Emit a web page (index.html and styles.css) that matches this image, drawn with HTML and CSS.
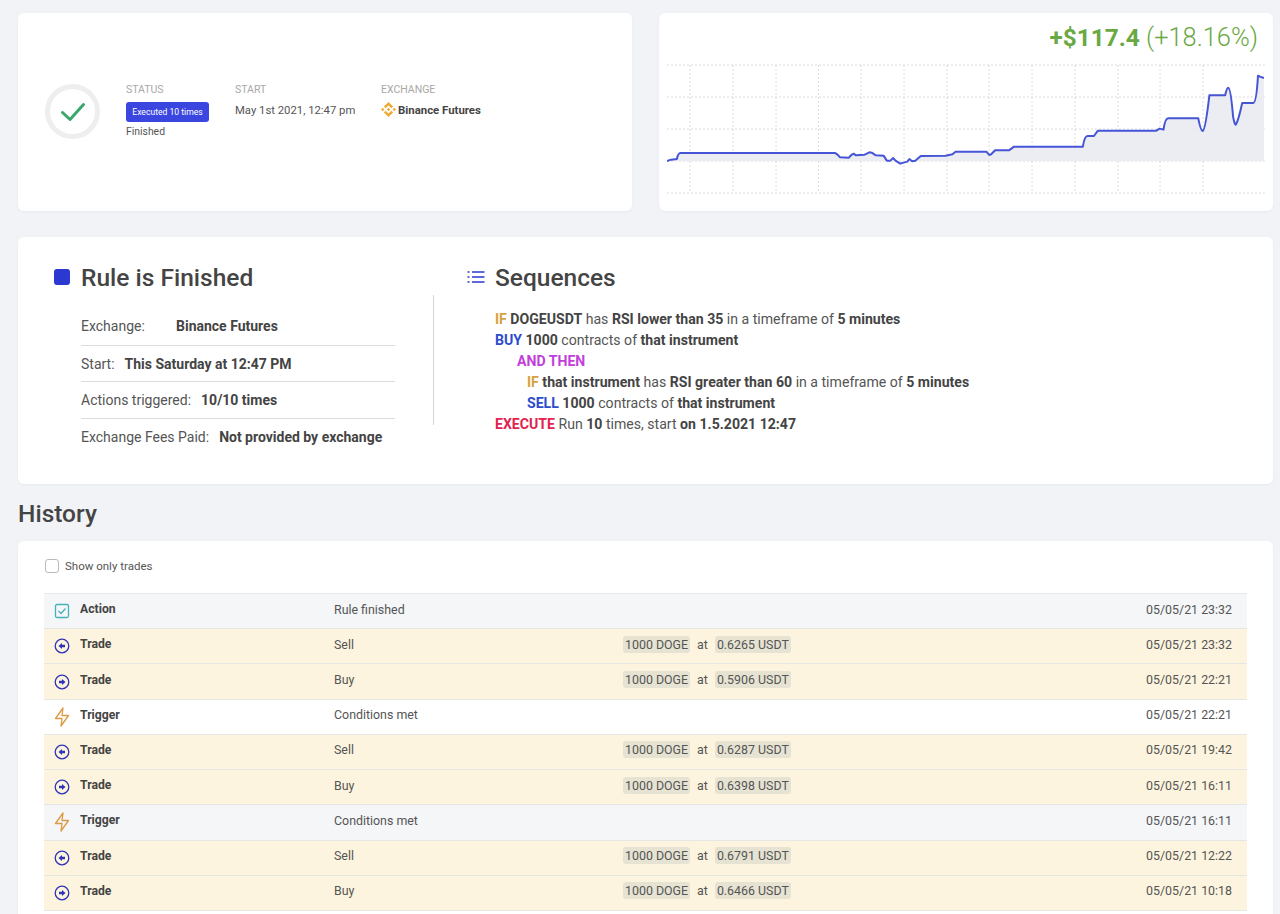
FILE: index.html
```html
<!DOCTYPE html>
<html lang="en">
<head>
<meta charset="utf-8">
<title>Rule is Finished</title>
<link rel="stylesheet" href="styles.css">
</head>
<body>
<main class="page">
  <section class="top">
    <div class="card summary">
      <div class="ring">
        <svg class="tick" viewBox="0 0 24 24"><path d="M1.500 12.500 9 19.500 22.500 4.500"/></svg>
      </div>
      <div class="meta meta-status">
        <div class="meta-label">STATUS</div>
        <div class="badge">Executed 10 times</div>
        <div class="meta-note">Finished</div>
      </div>
      <div class="meta meta-start">
        <div class="meta-label">START</div>
        <div class="meta-value">May 1st 2021, 12:47 pm</div>
      </div>
      <div class="meta">
        <div class="meta-label">EXCHANGE</div>
        <div class="exchange">
          <svg class="binance" viewBox="0 0 126.61 126.61"><path d="M38.73 53.2l24.59-24.58 24.6 24.6 14.3-14.31L63.32 0 24.43 38.9zM0 63.31l14.3-14.31 14.31 14.31-14.31 14.3zM38.73 73.41l24.59 24.59 24.6-24.6 14.31 14.29-38.9 38.91-38.91-38.88zM98 63.31l14.3-14.31 14.31 14.3-14.31 14.32zM77.83 63.3L63.32 48.78 52.59 59.51l-1.24 1.23-2.54 2.54 14.51 14.5 14.51-14.52z"/></svg>
          <span>Binance Futures</span>
        </div>
      </div>
    </div>
    <div class="card chart-card">
      <div class="profit"><b>+$117.4</b> <span>(+18.16%)</span></div>
      <svg class="chart" viewBox="0 0 598 135">
        <g class="grid-h">
          <path d="M0 5H598M0 37H598M0 69H598M0 101H598M0 133H598"/>
        </g>
        <g class="grid-v">
          <path d="M23 5V133M66 5V133M109 5V133M151.500 5V133M194 5V133M237 5V133M280 5V133M322 5V133M365 5V133M408 5V133M451 5V133M493 5V133M536 5V133"/>
        </g>
        <g transform="translate(-7.900 -50) scale(0.3953 0.3333)">
          <path class="area" d="M20 453L30 449 45 447 Q48 429 54 429L445 429Q450 431 458 442L480 443Q486 434 492 431L498 436 520 434 532 427 538 428 548 436 568 437 576 452 585 452 592 444 598 452 610 461 628 455 633 447 640 454 648 452 662 438 725 437 742 433 750 425 828 425 835 435 840 433 850 421 885 421 898 410 1072 410Q1076 378 1084 378L1100 378 1110 362 1258 362 1266 356 1276 359Q1280 325 1288 325L1364 325Q1370 362 1375 363 1382 360 1392 256L1432 256Q1436 233 1440 233 1446 235 1452 320 1456 345 1459 344 1466 330 1475 279L1503 279Q1511 279 1515 197L1520 200 1530 204V453Z"/>
          <path class="line" d="M20 453L30 449 45 447 Q48 429 54 429L445 429Q450 431 458 442L480 443Q486 434 492 431L498 436 520 434 532 427 538 428 548 436 568 437 576 452 585 452 592 444 598 452 610 461 628 455 633 447 640 454 648 452 662 438 725 437 742 433 750 425 828 425 835 435 840 433 850 421 885 421 898 410 1072 410Q1076 378 1084 378L1100 378 1110 362 1258 362 1266 356 1276 359Q1280 325 1288 325L1364 325Q1370 362 1375 363 1382 360 1392 256L1432 256Q1436 233 1440 233 1446 235 1452 320 1456 345 1459 344 1466 330 1475 279L1503 279Q1511 279 1515 197L1520 200 1530 204"/>
        </g>
      </svg>
    </div>
  </section>

  <section class="card rule">
    <div class="rule-left">
      <h2 class="heading"><span class="square"></span>Rule is Finished</h2>
      <ul class="facts">
        <li><span class="fact-name fact-wide">Exchange:</span><b>Binance Futures</b></li>
        <li><span class="fact-name">Start:</span><b>This Saturday at 12:47 PM</b></li>
        <li><span class="fact-name">Actions triggered:</span><b>10/10 times</b></li>
        <li><span class="fact-name">Exchange Fees Paid:</span><b>Not provided by exchange</b></li>
      </ul>
    </div>
    <div class="divider"></div>
    <div class="rule-right">
      <h2 class="heading">
        <svg class="list-icon" viewBox="0 0 18 14"><path d="M5 2H17.500M5 7H17.500M5 12H17.500"/><path class="dots" d="M.5 2H2.500M.5 7H2.500M.5 12H2.500"/></svg>
        Sequences
      </h2>
      <div class="seq">
        <p><span class="k-if">IF</span> <b>DOGEUSDT</b> has <b>RSI lower than 35</b> in a timeframe of <b>5 minutes</b></p>
        <p><span class="k-do">BUY</span> <b>1000</b> contracts of <b>that instrument</b></p>
        <p class="lvl-1"><span class="k-then">AND THEN</span></p>
        <p class="lvl-2"><span class="k-if">IF</span> <b>that instrument</b> has <b>RSI greater than 60</b> in a timeframe of <b>5 minutes</b></p>
        <p class="lvl-2"><span class="k-do">SELL</span> <b>1000</b> contracts of <b>that instrument</b></p>
        <p><span class="k-exec">EXECUTE</span> Run <b>10</b> times, start <b>on 1.5.2021 12:47</b></p>
      </div>
    </div>
  </section>

  <h2 class="history-title">History</h2>

  <section class="card history">
    <label class="filter"><span class="box"></span>Show only trades</label>
    <div class="table">
      <div class="row grey">
        <svg class="ico" viewBox="0 0 16 16"><rect class="teal" x="1.500" y="1.500" width="13" height="13" rx="1.500"/><path class="teal" d="M4.500 8 7 10.500 11.500 5.500"/></svg>
        <b>Action</b><span>Rule finished</span><span></span><span>05/05/21 23:32</span>
      </div>
      <div class="row trade">
        <svg class="ico" viewBox="0 0 16 16"><circle class="blue" cx="8" cy="8" r="6.800"/><path class="blue-fill" d="M4.500 8 8 5V6.800H11V9.200H8V11Z"/></svg>
        <b>Trade</b><span>Sell</span><span class="amounts"><em>1000 DOGE</em>at<em>0.6265 USDT</em></span><span>05/05/21 23:32</span>
      </div>
      <div class="row trade">
        <svg class="ico" viewBox="0 0 16 16"><circle class="blue" cx="8" cy="8" r="6.800"/><path class="blue-fill" d="M11.500 8 8 5V6.800H5V9.200H8V11Z"/></svg>
        <b>Trade</b><span>Buy</span><span class="amounts"><em>1000 DOGE</em>at<em>0.5906 USDT</em></span><span>05/05/21 22:21</span>
      </div>
      <div class="row">
        <svg class="ico bolt" viewBox="0 0 16 20"><path class="amber" d="M9 1 1.500 11.500H8L7 19 14.500 8.500H8Z"/></svg>
        <b>Trigger</b><span>Conditions met</span><span></span><span>05/05/21 22:21</span>
      </div>
      <div class="row trade">
        <svg class="ico" viewBox="0 0 16 16"><circle class="blue" cx="8" cy="8" r="6.800"/><path class="blue-fill" d="M4.500 8 8 5V6.800H11V9.200H8V11Z"/></svg>
        <b>Trade</b><span>Sell</span><span class="amounts"><em>1000 DOGE</em>at<em>0.6287 USDT</em></span><span>05/05/21 19:42</span>
      </div>
      <div class="row trade">
        <svg class="ico" viewBox="0 0 16 16"><circle class="blue" cx="8" cy="8" r="6.800"/><path class="blue-fill" d="M11.500 8 8 5V6.800H5V9.200H8V11Z"/></svg>
        <b>Trade</b><span>Buy</span><span class="amounts"><em>1000 DOGE</em>at<em>0.6398 USDT</em></span><span>05/05/21 16:11</span>
      </div>
      <div class="row grey">
        <svg class="ico bolt" viewBox="0 0 16 20"><path class="amber" d="M9 1 1.500 11.500H8L7 19 14.500 8.500H8Z"/></svg>
        <b>Trigger</b><span>Conditions met</span><span></span><span>05/05/21 16:11</span>
      </div>
      <div class="row trade">
        <svg class="ico" viewBox="0 0 16 16"><circle class="blue" cx="8" cy="8" r="6.800"/><path class="blue-fill" d="M4.500 8 8 5V6.800H11V9.200H8V11Z"/></svg>
        <b>Trade</b><span>Sell</span><span class="amounts"><em>1000 DOGE</em>at<em>0.6791 USDT</em></span><span>05/05/21 12:22</span>
      </div>
      <div class="row trade">
        <svg class="ico" viewBox="0 0 16 16"><circle class="blue" cx="8" cy="8" r="6.800"/><path class="blue-fill" d="M11.500 8 8 5V6.800H5V9.200H8V11Z"/></svg>
        <b>Trade</b><span>Buy</span><span class="amounts"><em>1000 DOGE</em>at<em>0.6466 USDT</em></span><span>05/05/21 10:18</span>
      </div>
    </div>
  </section>
</main>
</body>
</html>
```

FILE: styles.css
```css
* { box-sizing: border-box; }
html, body { margin: 0; height: 914px; overflow: hidden; }
body {
  background: #f1f3f7;
  color: #444;
  font-family: Roboto, "Liberation Sans", sans-serif;
  font-size: 14px;
}
.page { padding: 13px 7px 0 18px; }
.card {
  background: #fff;
  border-radius: 6px;
  box-shadow: 0 1px 3px rgba(40, 50, 80, .05);
}

/* top row */
.top { display: grid; grid-template-columns: 614px 614px; gap: 27px; }
.summary { height: 198px; display: flex; align-items: flex-start; padding: 71px 0 0 27px; }
.ring {
  width: 55px; height: 55px; border: 5px solid #eeeeee; border-radius: 50%;
  display: flex; align-items: center; justify-content: center;
  flex: none;
}
.tick { width: 24px; height: 24px; fill: none; stroke: #3aa76d; stroke-width: 3; stroke-linecap: round; stroke-linejoin: round; }
.meta { margin-top: -1px; }
.meta-status { margin-left: 26px; width: 109px; }
.meta-start { width: 146px; }
.meta-label { font-size: 10.500px; line-height: 13px; color: #a8a8a8; }
.badge {
  margin-top: 6px; width: 83px; height: 20px; border-radius: 3px;
  background: #3b46e0; color: #fff; font-size: 8.600px; line-height: 20px; text-align: center;
}
.meta-note { margin-top: 3px; font-size: 10.400px; line-height: 14px; color: #555; }
.meta-value { margin-top: 8px; font-size: 11.300px; line-height: 14px; color: #555; }
.exchange { display: flex; align-items: center; gap: 2px; margin-top: 6px; font-size: 11.400px; line-height: 14px; font-weight: 700; color: #444; }
.binance { width: 15px; height: 15px; fill: #eeaa33; }

.chart-card { height: 198px; padding: 8px 8px 0 8px; display: flex; flex-direction: column; }
.profit { text-align: right; padding-right: 7px; font-size: 25px; line-height: 32px; color: #6aa843; }
.profit b { font-weight: 700; font-size: 24.400px; }
.profit span { font-weight: 300; font-size: 25.400px; }
.chart { display: block; width: 598px; height: 135px; margin-top: 6px; }
.grid-h path, .grid-v path { fill: none; stroke: #dcdcdc; stroke-width: 1; stroke-dasharray: 2 2; }
.area { fill: #e9ebf1; opacity: .9; }
.line { fill: none; stroke: #4654d6; stroke-width: 2; vector-effect: non-scaling-stroke; stroke-linejoin: round; }

/* rule */
.rule { margin-top: 26px; height: 247px; display: flex; padding: 0 0 0 36px; }
.rule-left { width: 379px; flex: none; }
.heading { display: flex; align-items: center; margin: 25px 0 0; height: 30px; font-size: 24.500px; font-weight: 500; color: #444; }
.square { width: 16px; height: 16px; border-radius: 3px; background: #2c38cf; margin-right: 11px; }
.facts { list-style: none; margin: 17px 0 0 27px; padding: 0; width: 314px; }
.facts li { height: 36.500px; line-height: 36px; border-bottom: 1px solid #dcdcdc; color: #555; }
.facts li:first-child { line-height: 35px; }
.facts li:last-child { border-bottom: 0; }
.facts b { font-weight: 700; color: #444; }
.fact-name { margin-right: 10px; }
.fact-wide { display: inline-block; width: 95px; margin-right: 0; }
.divider { width: 1px; height: 130px; margin-top: 58px; background: #d5d5d5; flex: none; }
.rule-right { margin-left: 33px; }
.list-icon { width: 18px; height: 14px; margin-right: 10px; fill: none; stroke: #2c38cf; stroke-width: 1.700; }
.seq { margin: 17px 0 0 28px; font-size: 14.100px; line-height: 21px; color: #555; }
.seq p { margin: 0; white-space: nowrap; }
.seq b { color: #444; font-weight: 700; }
.lvl-1 { padding-left: 22px; }
.lvl-2 { padding-left: 32px; }
.k-if { color: #d6a33f; font-weight: 700; }
.k-do { color: #2f4ccd; font-weight: 700; }
.k-then { color: #c23fdc; font-weight: 700; }
.k-exec { color: #e2234f; font-weight: 700; }

/* history */
.history-title { margin: 15px 0 12px; height: 30px; line-height: 30px; font-size: 24.500px; font-weight: 500; color: #444; }
.history { padding: 18px 26px 40px; }
.filter { display: flex; align-items: center; height: 14px; font-size: 11.500px; color: #555; padding-left: 1px; }
.box { width: 14px; height: 14px; border: 1px solid #bbb; border-radius: 3px; background: #fff; margin-right: 6px; }
.table { margin-top: 20px; border-top: 1px solid #e6e8ec; }
.row {
  display: grid;
  grid-template-columns: 26px 254px 289px 1fr auto;
  align-items: center;
  height: 35.220px;
  padding: 0 15px 0 10px;
  border-bottom: 1px solid #e6e6e4;
  font-size: 12.400px;
  color: #555;
}
.row b { font-weight: 700; color: #444; font-size: 12.200px; }
.row > b, .row > span { padding-bottom: 4px; }
.grey { background: #f4f6f8; }
.trade { background: #fcf4de; }
.ico { width: 16px; height: 16px; }
.bolt { height: 20px; }
.teal { fill: none; stroke: #46b2b8; stroke-width: 1.300; }
.blue { fill: none; stroke: #2f35b8; stroke-width: 1.300; }
.blue-fill { fill: #2f35b8; }
.amber { fill: none; stroke: #dd9a42; stroke-width: 1.300; stroke-linejoin: round; }
.amounts { display: flex; align-items: center; gap: 7px; }
.amounts em { font-style: normal; background: #e7e3d3; border-radius: 3px; padding: 1px 2px; }
```
